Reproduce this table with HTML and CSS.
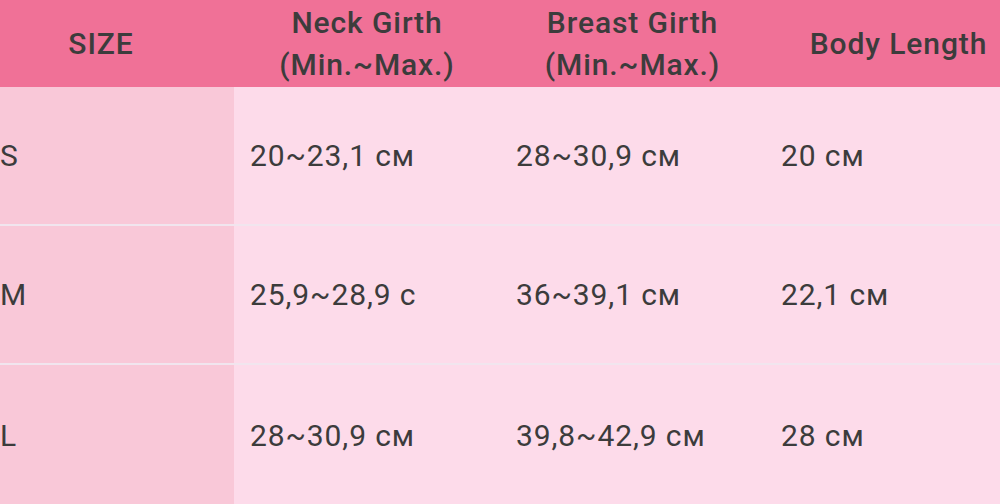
FILE: index.html
```html
<!DOCTYPE html>
<html>
<head>
<meta charset="utf-8">
<link rel="stylesheet" href="styles.css">
</head>
<body>
<div class="table">
  <div class="row head">
    <div class="cell c0">SIZE</div>
    <div class="cell">Neck Girth<br>(Min.~Max.)</div>
    <div class="cell">Breast Girth<br>(Min.~Max.)</div>
    <div class="cell">Body Length</div>
  </div>
  <div class="row">
    <div class="cell c0">S</div>
    <div class="cell">20~23,1 см</div>
    <div class="cell">28~30,9 см</div>
    <div class="cell">20 см</div>
  </div>
  <div class="row">
    <div class="cell c0">M</div>
    <div class="cell">25,9~28,9 с</div>
    <div class="cell">36~39,1 см</div>
    <div class="cell">22,1 см</div>
  </div>
  <div class="row last">
    <div class="cell c0">L</div>
    <div class="cell">28~30,9 см</div>
    <div class="cell">39,8~42,9 см</div>
    <div class="cell">28 см</div>
  </div>
</div>
</body>
</html>
```
FILE: styles.css
```css
html, body {
  margin: 0;
  padding: 0;
  width: 1000px;
  height: 504px;
  overflow: hidden;
  background: #fddbea;
}
.table {
  width: 1064px;
  margin-left: -32px;
  font-family: Roboto, "Liberation Sans", sans-serif;
  color: #3c3c3c;
  display: flex;
  flex-direction: column;
  gap: 2px;
  background: #f1e5ee;
}
.row {
  display: grid;
  grid-template-columns: 266px 266px 265px 267px;
  height: 137px;
  background: #fddbea;
}
.row.last {
  height: 142px;
}
.row.head {
  height: 87px;
  background: #f07197;
  margin-bottom: -2px;
}
.cell {
  display: flex;
  align-items: center;
  padding-left: 16px;
  font-size: 30px;
  line-height: 42px;
  letter-spacing: 0.9px;
}
.row .c0 {
  background: #f9c8d8;
  padding-left: 32px;
}
.head .cell {
  justify-content: center;
  text-align: center;
  padding-left: 0;
  font-weight: 500;
  font-size: 30px;
  letter-spacing: 0.9px;
  background: transparent;
}
```
